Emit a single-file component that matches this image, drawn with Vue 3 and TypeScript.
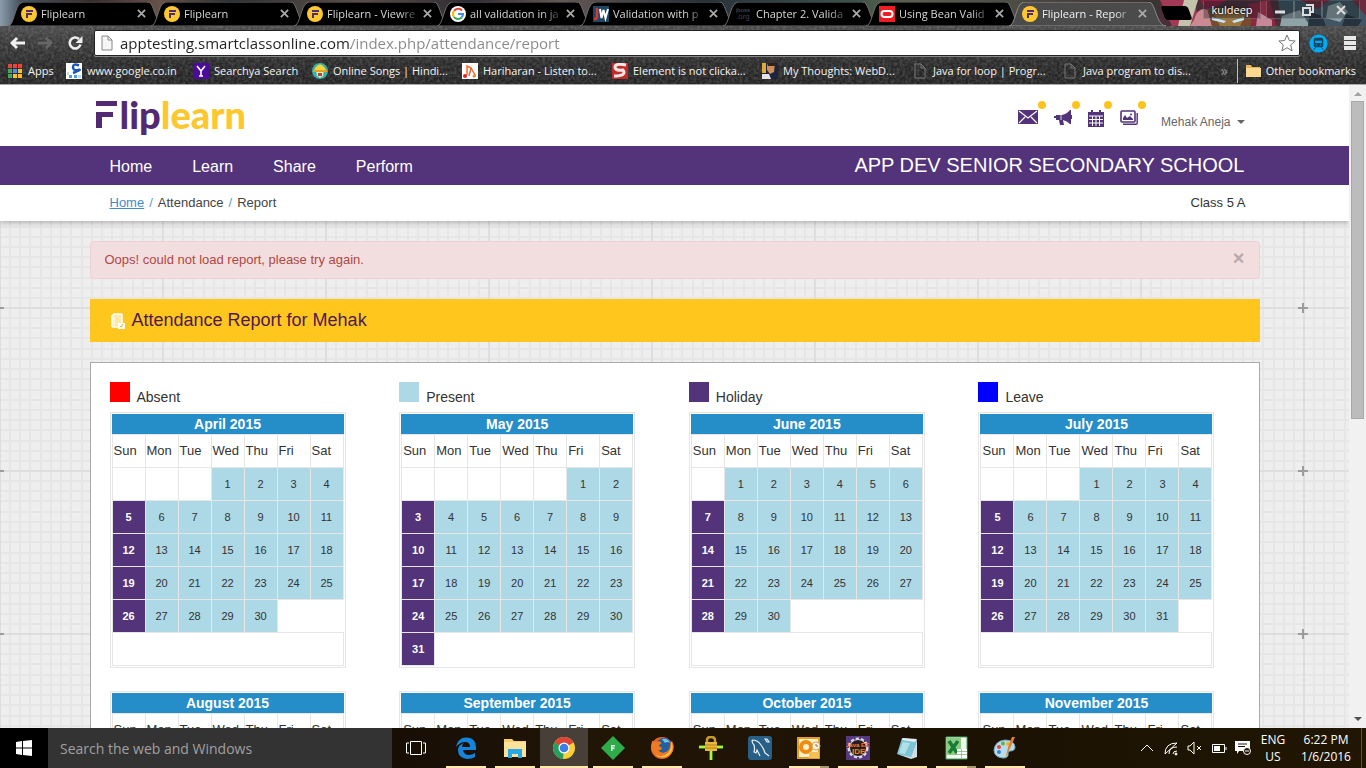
<script setup lang="ts">
import { ref } from 'vue'

interface Tab { title: string; icon: string; active?: boolean }
interface Bookmark { title: string; icon: string }
interface TaskApp { name: string; icon: string; state: string }
interface Month { name: string; offset: number; days: number }

const tabs: Tab[] = [
  { title: 'Fliplearn', icon: 'flip' },
  { title: 'Fliplearn', icon: 'flip' },
  { title: 'Fliplearn - Viewre', icon: 'flip' },
  { title: 'all validation in ja', icon: 'google' },
  { title: 'Validation with p', icon: 'jw' },
  { title: 'Chapter 2. Valida', icon: 'jboss' },
  { title: 'Using Bean Valid', icon: 'oracle' },
  { title: 'Fliplearn - Repor', icon: 'flip', active: true }
]

const bookmarks: Bookmark[] = [
  { title: 'Apps', icon: 'apps' },
  { title: 'www.google.co.in', icon: 's' },
  { title: 'Searchya Search', icon: 'y' },
  { title: 'Online Songs | Hindi...', icon: 'songs' },
  { title: 'Hariharan - Listen to...', icon: 'music' },
  { title: 'Element is not clicka...', icon: 'stack' },
  { title: 'My Thoughts: WebD...', icon: 'thoughts' },
  { title: 'Java for loop | Progr...', icon: 'page' },
  { title: 'Java program to dis...', icon: 'page' }
]

const apps: TaskApp[] = [
  { name: 'Edge', icon: 'edge', state: 'open' },
  { name: 'File Explorer', icon: 'explorer', state: 'open' },
  { name: 'Chrome', icon: 'chrome', state: 'current' },
  { name: 'Feeder', icon: 'diamond', state: 'open' },
  { name: 'Firefox', icon: 'firefox', state: 'open' },
  { name: 'Tunnel', icon: 'lock', state: '' },
  { name: 'MySQL Workbench', icon: 'mysql', state: '' },
  { name: 'Outlook', icon: 'outlook', state: 'open many' },
  { name: 'Java EE IDE', icon: 'eclipse', state: 'open' },
  { name: 'Notepad', icon: 'notepad', state: 'open' },
  { name: 'Excel', icon: 'excel', state: 'open many' },
  { name: 'Paint', icon: 'paint', state: 'open' }
]

const legend = [
  { label: 'Absent', kind: 'absent' },
  { label: 'Present', kind: 'present' },
  { label: 'Holiday', kind: 'holiday' },
  { label: 'Leave', kind: 'leave' }
]

const weekdays = ['Sun', 'Mon', 'Tue', 'Wed', 'Thu', 'Fri', 'Sat']

const months: Month[] = [
  { name: 'April 2015', offset: 3, days: 30 },
  { name: 'May 2015', offset: 5, days: 31 },
  { name: 'June 2015', offset: 1, days: 30 },
  { name: 'July 2015', offset: 3, days: 31 },
  { name: 'August 2015', offset: 6, days: 31 },
  { name: 'September 2015', offset: 2, days: 30 },
  { name: 'October 2015', offset: 4, days: 31 },
  { name: 'November 2015', offset: 0, days: 30 }
]

function weeksOf(m: Month): number[][] {
  const cells: number[] = Array(m.offset).fill(0)
  for (let d = 1; d <= m.days; d++) cells.push(d)
  const weeks: number[][] = []
  for (let i = 0; i < cells.length; i += 7) weeks.push(cells.slice(i, i + 7))
  return weeks
}

const gridSteps = [10, 20, 30, 41, 51, 61, 71, 82, 92, 102, 112, 122, 133, 143, 153]
const address = ref('apptesting.smartclassonline.com/index.php/attendance/report')
const query = ref('')
const alertOpen = ref(true)
</script>

<template>
  <div class="desktop">
    <header class="browser">
      <svg class="theme" viewBox="0 0 206 26" preserveAspectRatio="none" aria-hidden="true">
        <path fill="#4a2f38" d="M0 0h206v26H0z" />
        <path fill="#a33a55" d="M0 0h34l6 26H12z" />
        <path fill="#c4c3ac" d="M24 0h14l-8 26H18z" />
        <path fill="#8b2040" d="M40 0h26l-18 12z" />
        <path fill="#c98a94" d="M34 20q4-14 14-10l4 16H30z" />
        <path fill="#7a4a2c" d="M47 8h50l-6 18H52z" />
        <path fill="#a0773f" d="M54 14h32l-6 12H60z" />
        <path fill="#bfe8ff" d="M52 17l14 4-2 2-12-3zM84 17l-12 4 2 2 10-3z" />
        <path fill="#8c2741" d="M88 4l22-4 6 26H92z" />
        <path fill="#c48898" d="M98 12l14 8v6H96z" />
        <path fill="#405665" d="M118 0h88v26h-84z" />
        <path fill="#8ea3a8" d="M122 16l18-6 10 16h-30zM168 6l12-4 8 10-8 10-14-4z" />
        <path fill="#6d2c3d" d="M140 0h30l-12 9zM192 0h14v16z" />
        <path fill="#26323d" d="M150 12l12 4 4 10h-18zM186 14l16 6-4 6h-16z" />
      </svg>
      <div class="tabstrip">
        <div v-for="(t, i) in tabs" :key="i" class="tab" :class="{ active: t.active }">
          <svg class="tab-shape" viewBox="0 0 158 25" preserveAspectRatio="none" aria-hidden="true">
            <path d="M0 25C6 25 7 3 13 1Q14 0 16 0H139Q142 0 143 2C147 8 149 25 157 25Z" />
          </svg>
          <svg class="fav" viewBox="0 0 16 16" aria-hidden="true">
            <template v-if="t.icon === 'flip'">
              <circle cx="8" cy="8" r="8" fill="#fdc82f" />
              <path d="M5 4h7v2H5zM5 7h6v2H7v3H5z" fill="#4f2d6e" />
            </template>
            <template v-else-if="t.icon === 'google'">
              <circle cx="8" cy="8" r="8" fill="#fff" />
              <path d="M12 4.5A5 5 0 0 0 4 5" fill="none" stroke="#ea4335" stroke-width="2" />
              <path d="M4 5a5 5 0 0 0 0 6" fill="none" stroke="#fbbc05" stroke-width="2" />
              <path d="M4 11a5 5 0 0 0 7.500 .500" fill="none" stroke="#34a853" stroke-width="2" />
              <path d="M8 8h5a5 5 0 0 1-1.500 3.600" fill="none" stroke="#4285f4" stroke-width="2" />
            </template>
            <template v-else-if="t.icon === 'jw'">
              <path fill="#1b4a66" d="M0 0h16v16H0z" />
              <path d="M4 2v9q0 2-3 2" stroke="#d33" stroke-width="2.500" fill="none" />
              <path d="M7 3l1.500 9 2-8 2 8L15 3" stroke="#fff" stroke-width="2" fill="none" />
            </template>
            <template v-else-if="t.icon === 'jboss'">
              <text x="0" y="6" class="tiny">jboss</text>
              <text x="0" y="13" class="tiny org">.org</text>
            </template>
            <template v-else>
              <path fill="#ee1c25" d="M0 0h16v16H0z" />
              <rect x="2.500" y="5" width="11" height="6" rx="3" fill="none" stroke="#fff" stroke-width="2" />
            </template>
          </svg>
          <span class="tab-title">{{ t.title }}</span>
          <button class="tab-close" type="button" aria-label="Close tab">
            <svg viewBox="0 0 10 10"><path d="M1 1l8 8M9 1l-8 8" /></svg>
          </button>
        </div>
        <button class="newtab" type="button" aria-label="New tab"></button>
        <div class="window-controls">
          <button class="profile" type="button">kuldeep</button>
          <button type="button" aria-label="Minimize"><svg viewBox="0 0 14 14"><path d="M2 9h10" stroke-width="3" /></svg></button>
          <button type="button" aria-label="Restore"><svg viewBox="0 0 14 14"><path d="M5 2h7v7H9M2 5h7v7H2z" stroke-width="2" /></svg></button>
          <button type="button" class="wide" aria-label="Close window"><svg viewBox="0 0 14 14"><path d="M3 3l8 8M11 3l-8 8" stroke-width="2" /></svg></button>
        </div>
      </div>

      <div class="chrome">
        <svg class="grain" aria-hidden="true">
          <filter id="grain"><feTurbulence type="fractalNoise" baseFrequency="0.35" numOctaves="2" seed="4" /><feColorMatrix values="0 0 0 0 1  0 0 0 0 1  0 0 0 0 1  0.9 0 0 0 -0.3" /></filter>
          <rect width="100%" height="100%" filter="url(#grain)" />
        </svg>
        <div class="toolbar">
          <button type="button" aria-label="Back"><svg viewBox="0 0 16 16"><path d="M1 8l6-6 2 2-2.500 2.500H16v3H6.500L9 12l-2 2z" fill="#f1f1f1" /></svg></button>
          <button type="button" aria-label="Forward"><svg viewBox="0 0 16 16"><path d="M15 8L9 2 7 4l2.500 2.500H0v3h9.500L7 12l2 2z" fill="#666" /></svg></button>
          <button type="button" aria-label="Reload"><svg viewBox="0 0 16 16"><path d="M12 4A5.500 5.500 0 1 0 13.500 9.500" fill="none" stroke="#eee" stroke-width="2.600" /><path d="M15.500 1v7h-7z" fill="#eee" /></svg></button>
          <div class="omnibox">
            <svg class="doc" viewBox="0 0 12 16" aria-hidden="true"><path d="M1 1h6l4 4v10H1zM7 1v4h4" fill="#f6f6f6" stroke="#888" /></svg>
            <input v-model="address" type="text" aria-label="Address" spellcheck="false" />
            <button type="button" aria-label="Bookmark this page"><svg viewBox="0 0 18 18"><path d="M9 1l2.300 5.500 5.900.5-4.500 3.900 1.400 5.900L9 13.700l-5.100 3.100 1.400-5.900L.800 7l5.900-.5z" fill="#fff" stroke="#777" /></svg></button>
          </div>
          <button type="button" class="ext" aria-label="Trains">
            <svg viewBox="0 0 20 20"><circle cx="10" cy="10" r="9.500" fill="#03a9f4" /><path d="M7 4h6q2 0 2 2v6q0 2-2 2H7q-2 0-2-2V6q0-2 2-2z" fill="#14445c" /><path d="M6.500 7h7v2.500h-7z" fill="#03a9f4" /><path d="M7 14l-2 2.500M13 14l2 2.500" stroke="#14445c" /><path d="M7 11.500h1.500M11.500 11.500H13" stroke="#03a9f4" /></svg>
          </button>
          <button type="button" class="menu" aria-label="Menu"><svg viewBox="0 0 14 14"><path d="M1 0h12v4H1zM1 5h12v4H1zM1 10h12v4H1z" fill="#e8e8e8" /></svg></button>
        </div>

        <nav class="bookmarks" aria-label="Bookmarks">
          <a v-for="b in bookmarks" :key="b.title" href="#" :class="{ launcher: b.icon === 'apps' }">
            <svg viewBox="0 0 16 16" aria-hidden="true">
              <template v-if="b.icon === 'apps'">
                <path fill="#e8453c" d="M1 1h4v4H1zM6 1h4v4H6zM11 1h4v4h-4z" />
                <path fill="#3fa85b" d="M1 6h4v4H1z" /><path fill="#4a8af4" d="M6 6h4v4H6z" /><path fill="#fbbc2f" d="M11 6h4v4h-4zM6 11h4v4H6z" />
                <path fill="#3fa85b" d="M1 11h4v4H1z" /><path fill="#fbbc2f" d="M11 11h4v4h-4z" />
                <path d="M5.500 0v16M10.500 0v16M0 5.500h16M0 10.500h16" stroke="#333" />
              </template>
              <template v-else-if="b.icon === 's'">
                <path fill="#fff" d="M0 0h16v16H0z" />
                <path d="M13 2.500Q7 0 7 4t5 3-5 3" fill="none" stroke="#1d57b4" stroke-width="2.500" />
                <path fill="#4b9be6" d="M3 12h3v3H3zM8 12h3v3H8z" /><path fill="#bcdcf6" d="M12 12h3v3h-3zM1 9h2v3H1z" />
              </template>
              <template v-else-if="b.icon === 'y'">
                <path fill="#4b0c9c" d="M0 0h16v16H0z" /><path d="M4 3l4 5 4-5M8 8v5M6 13h4" stroke="#fff" stroke-width="1.600" fill="none" />
              </template>
              <template v-else-if="b.icon === 'songs'">
                <circle cx="8" cy="8" r="8" fill="#38b1a9" /><path d="M2 7q6-11 12 0z" fill="#f4d43a" /><path d="M4 7h8l-1 6-3 2-3-2z" fill="#e8e2cf" /><path d="M1 7h14v2H1z" fill="#e5a21f" /><path d="M6 10h4v3H6z" fill="#a04f2f" />
              </template>
              <template v-else-if="b.icon === 'music'">
                <path fill="#fff" d="M0 0h16v16H0z" /><path d="M5 12V3l4 2-2 8M9 5l4 7v2" stroke="#ef6b2e" stroke-width="1.500" fill="none" /><circle cx="3" cy="13" r="2" fill="#e2231a" /><circle cx="12" cy="13" r="1.500" fill="#ef8b2e" />
              </template>
              <template v-else-if="b.icon === 'stack'">
                <path fill="#c22b2b" d="M0 0h16v16H0z" /><path d="M14 2Q3 0 3 4t8 3q4 6-9 6" fill="none" stroke="#f3e5e2" stroke-width="3" />
              </template>
              <template v-else-if="b.icon === 'thoughts'">
                <path fill="#1c2440" d="M0 0h16v16H0z" /><path d="M5 0h8l-1 9-4 2-3-4z" fill="#d18f55" /><path d="M0 11l7 0 2 5H0z" fill="#e6e3e8" /><path d="M5 0h9v3H6z" fill="#33211c" /><path d="M0 0h4v10H0z" fill="#e3a83c" />
              </template>
              <template v-else>
                <path d="M3 1h6l4 4v10H3zM9 1v4h4" fill="none" stroke="#777" />
              </template>
            </svg>
            <span>{{ b.title }}</span>
          </a>
          <button class="more" type="button" aria-label="More bookmarks">»</button>
          <a class="other" href="#">
            <svg viewBox="0 0 16 16" aria-hidden="true"><path d="M1 2h5l1 2h8v10H1z" fill="#e9b55c" /><path d="M1 5h15v9H1z" fill="#fcd98f" /></svg>
            <span>Other bookmarks</span>
          </a>
        </nav>
      </div>
    </header>

    <div class="viewport">
      <div class="scroller">
        <div class="page">
          <svg class="backdrop" aria-hidden="true">
            <defs>
              <pattern id="cells" x="-1" y="59" width="163" height="163" patternUnits="userSpaceOnUse">
                <path v-for="s in gridSteps" :key="s" :d="`M${s} 0h2v163h-2zM0 ${s}h163v2H0z`" fill="#e6e6e6" />
                <path d="M0 0h2v163H0zM0 0h163v2H0z" fill="#dedede" />
              </pattern>
              <pattern id="crosses" x="-2" y="59" width="1304" height="163" patternUnits="userSpaceOnUse">
                <path d="M0 0h6v2H0zM1300 0h4v2h-4zM0 0h2v6H0zM0 159h2v4H0z" fill="#9c9c9c" />
              </pattern>
            </defs>
            <rect width="100%" height="100%" fill="url(#cells)" />
            <rect width="100%" height="100%" fill="url(#crosses)" />
          </svg>

          <div class="masthead">
            <div class="container brandbar">
              <a class="logo" href="#" aria-label="Fliplearn">
                <svg viewBox="0 0 22 28" aria-hidden="true"><path d="M0 1h21v5H0zM0 12h17v5H6v11H0z" fill="#532a72" /></svg>
                <span class="lip">lip</span><span class="learn">learn</span>
              </a>
              <div class="tools">
                <button type="button" aria-label="Messages"><svg class="i-mail" viewBox="0 0 20 14"><path d="M0 0h20v14H0z" fill="#53337a" /><path d="M1 1l9 7 9-7M1 13l6-6M19 13l-6-6" fill="none" stroke="#fff" stroke-width="1.200" /></svg></button>
                <button type="button" aria-label="Announcements"><svg class="i-horn" viewBox="0 0 18 16"><path d="M0 6h2V5h6q5-1 8-5h1v5h1v4h-1v5h-1q-3-3-7-4l1 5H6L5 10H2V8H0z" fill="#53337a" /><path d="M7 5v5" stroke="#fff" stroke-width=".8" /></svg></button>
                <button type="button" aria-label="Calendar"><svg class="i-cal" viewBox="0 0 16 17"><path d="M0 2h16v15H0zM3 0h2v4H3zM11 0h2v4h-2z" fill="#53337a" /><path d="M1 6h14M1 9.500h14M1 13h14M4.500 6v10M8 6v10M11.500 6v10" stroke="#fff" /></svg></button>
                <button type="button" aria-label="Gallery"><svg class="i-pic" viewBox="0 0 18 15"><rect x="1" y="1" width="14" height="11" rx="1" fill="none" stroke="#53337a" stroke-width="1.600" /><path d="M3 14.200h13q1.200 0 1.200-1.200V3" fill="none" stroke="#53337a" stroke-width="1.400" /><path d="M3 10V8l2-3 2 3 3-2 3 3v1z" fill="#53337a" /><circle cx="11" cy="4.500" r="1" fill="#53337a" /></svg></button>
                <button type="button" class="user">Mehak Aneja</button>
              </div>
            </div>
            <nav class="mainnav">
              <div class="container navrow">
                <a href="#">Home</a><a href="#">Learn</a><a href="#">Share</a><a href="#">Perform</a>
                <h1>APP DEV SENIOR SECONDARY SCHOOL</h1>
              </div>
            </nav>
            <div class="container crumbs">
              <a href="#">Home</a><i>/</i><span>Attendance</span><i>/</i><span>Report</span>
              <strong>Class 5 A</strong>
            </div>
          </div>

          <main class="container content">
            <div v-if="alertOpen" class="alert" role="alert">
              <span>Oops! could not load report, please try again.</span>
              <button type="button" aria-label="Dismiss" @click="alertOpen = false">×</button>
            </div>
            <h2>
              <svg viewBox="0 0 14 16" aria-hidden="true"><path d="M3 1h7q1 0 1 1v12H2q-1 0-1-1V3z" fill="#ffe9a8" stroke="#fff" stroke-width="1.500" /><path d="M3 4v8" stroke="#fff" /><path d="M7 10h7v6H7z" fill="#fff" /><path d="M9 13l1 1 2-3" fill="none" stroke="#f2b400" /></svg>
              Attendance Report for Mehak
            </h2>
            <section class="panel">
              <div class="columns legend">
                <div v-for="l in legend" :key="l.kind" class="key"><b :class="l.kind"></b><span>{{ l.label }}</span></div>
              </div>
              <div class="columns">
                <div v-for="m in months" :key="m.name" class="month">
                  <table>
                    <caption>{{ m.name }}</caption>
                    <thead><tr><th v-for="w in weekdays" :key="w" scope="col">{{ w }}</th></tr></thead>
                    <tbody>
                      <tr v-for="(week, wi) in weeksOf(m)" :key="wi">
                        <td v-for="(d, di) in week" :key="di" :class="d ? (di === 0 ? 'holiday' : 'present') : ''">{{ d || '' }}</td>
                      </tr>
                      <tr v-if="weeksOf(m).length < 6"><td colspan="7"></td></tr>
                    </tbody>
                  </table>
                </div>
              </div>
            </section>
          </main>
        </div>
      </div>
      <div class="scrollbar" aria-hidden="true"><i class="up"></i><b></b><i class="down"></i></div>
    </div>

    <footer class="taskbar">
      <button class="start" type="button" aria-label="Start"><svg viewBox="0 0 16 16"><path d="M0 2l6-1v6.500H0zM7 1l9-1v7.500H7zM0 8.500h6V15l-6-1zM7 8.500h9V16l-9-1z" fill="#fff" /></svg></button>
      <input v-model="query" class="search" type="search" placeholder="Search the web and Windows" aria-label="Search the web and Windows" />
      <button class="taskview" type="button" aria-label="Task View"><svg viewBox="0 0 20 16"><path d="M4.500 1.500h11v13h-11zM3 3H.500v10H3M17 3h2.500v10H17" fill="none" stroke="#fff" /></svg></button>
      <div class="apps">
        <button v-for="a in apps" :key="a.name" type="button" :class="a.state" :aria-label="a.name">
          <svg viewBox="0 0 24 24">
            <template v-if="a.icon === 'edge'"><path d="M2 11Q4 1 13 1.500q9 .5 9 10V14H9q1 5 6 5 3 0 6-2v4q-3 2-8 2-9-1-9-9 0-5 6-7-2 1-2 4h8q0-5-5-5-5 0-9 5z" fill="#1684dc" /></template>
            <template v-else-if="a.icon === 'explorer'"><path d="M1 3h8l2 2h12v16H1z" fill="#f4cf6a" /><path d="M1 6h22v15H1z" fill="#fbe39a" /><path d="M5 22v-9h14v9h-4v-4H9v4z" fill="#28a8e8" /></template>
            <template v-else-if="a.icon === 'chrome'"><circle cx="12" cy="12" r="11" fill="#f9cf35" /><path d="M12 12L2.500 6.500A11 11 0 0 1 21.500 6.500z" fill="#dc4437" /><path d="M12 12L2.500 6.500A11 11 0 0 0 11 23z" fill="#24a05a" /><path d="M12 12L3 6.500l8-2 11 2.500H12z" fill="#dc4437" /><circle cx="12" cy="12" r="5.500" fill="#fff" /><circle cx="12" cy="12" r="4.300" fill="#3d7de8" /></template>
            <template v-else-if="a.icon === 'diamond'"><path d="M12 0l12 12-12 12L0 12z" fill="#2eac4a" /><path d="M10 9h4v1.500h-2.500v1h2V13h-2v2H10z" fill="#e8f8e8" /></template>
            <template v-else-if="a.icon === 'firefox'"><circle cx="12" cy="12" r="11" fill="#e8641f" /><circle cx="14" cy="10" r="8" fill="#245f9f" /><path d="M12 3q6-1 8 4-3-2-5 0z" fill="#6fc6ea" /><path d="M2 5l4 1q3-2 6 1-3 1-3 3l3 2q-1 3-4 2 3 4 8 2 5-3 4-9l2-2q4 7-1 13-5 5-12 3Q1 18 1 11z" fill="#ee7a23" /><path d="M21 5q4 8-2 14-7 5-14 0 8 3 13-2 4-5 3-12z" fill="#ffc043" /></template>
            <template v-else-if="a.icon === 'lock'"><path d="M0 11h24M12 14v10" stroke="#3c7d1c" stroke-width="4" /><path d="M0 11h24M12 14v10" stroke="#b8ef3d" stroke-width="2" /><path d="M8 7V4q0-3 4-3t4 3v3" stroke="#c89a28" stroke-width="2.500" fill="none" /><path d="M6 6h12v9H6z" fill="#e8b83c" /><path d="M6 9h12M6 12h12" stroke="#b78018" /></template>
            <template v-else-if="a.icon === 'mysql'"><rect width="24" height="24" rx="3" fill="#285f86" /><path d="M4 4q6 0 9 5 3 4 4 8l4 3M4 4q0 3 2 5 1 4 0 7l2 1 1-3 3 6M17 3l2 3h2l-2-3z" fill="none" stroke="#e7f1f7" stroke-width="1.200" /></template>
            <template v-else-if="a.icon === 'outlook'"><path d="M1 2h21v20H1z" fill="#fff0c8" stroke="#e79b20" stroke-width="2" /><circle cx="9" cy="11" r="5" fill="none" stroke="#ed8b16" stroke-width="4" /><path d="M12 16h10v6H12z" fill="#f4c058" /><circle cx="19" cy="10" r="4" fill="#fff4da" stroke="#d9a550" /><path d="M19 8v2h2" stroke="#966" fill="none" /></template>
            <template v-else-if="a.icon === 'eclipse'"><path d="M0 0h24v24H0z" fill="#563980" /><circle cx="12" cy="12" r="9" fill="#291a24" stroke="#ddd" stroke-width="3" stroke-dasharray="3 2" /><circle cx="12" cy="12" r="8.500" fill="#291a24" stroke="#ddd" /><text x="0" y="11" class="badge">Java EE</text><text x="6" y="18" class="badge ide">IDE</text></template>
            <template v-else-if="a.icon === 'notepad'"><path d="M7 2l15 2-6 18-14-4z" fill="#7cc5d8" /><path d="M8 2l14 1-2 3L7 4z" fill="#e4eef2" /><path d="M2 18l14 3 6-17v17l-6 2z" fill="#d0dde2" /><path d="M8 6l-4 11 6 1 5-11z" fill="#b1e0e7" /></template>
            <template v-else-if="a.icon === 'excel'"><path d="M2 1h21v22H2z" fill="#f0f8ee" stroke="#46a35a" /><path d="M2 2h15v17H2z" fill="#8dcb83" /><path d="M5 5l8 12M14 5L5 17" stroke="#187c36" stroke-width="3.500" /><path d="M13 13h10v9H13z" fill="#fff" /><path d="M13 15.500h10M13 18.500h10M17.500 13v9" stroke="#79bb83" stroke-width=".8" /></template>
            <template v-else><path d="M12 4q9 0 10 7 0 4-5 4-2 0-2 2 1 5-5 5-9-1-9-8Q2 5 12 4z" fill="#b9dced" stroke="#78a9c2" /><circle cx="6" cy="11" r="2" fill="#e6452f" /><circle cx="10" cy="7.500" r="2" fill="#5ab44b" /><circle cx="6" cy="16" r="2" fill="#3b80d0" /><circle cx="15" cy="8" r="2" fill="#f2b12d" /><path d="M22 1l-3 7-7 15 4-15 3-7z" fill="#dd8234" /></template>
          </svg>
        </button>
      </div>
      <div class="tray">
        <button type="button" aria-label="Show hidden icons"><svg viewBox="0 0 16 16"><path d="M2 11l6-6 6 6" /></svg></button>
        <button type="button" aria-label="Network"><svg viewBox="0 0 16 16"><path d="M2 14Q2 3 14 3M6 14q0-7 8-7M10 14q0-3 4-3M2 14L14 3" /><circle cx="13" cy="14" r="1" fill="#fff" /></svg></button>
        <button type="button" aria-label="Volume"><svg viewBox="0 0 16 16"><path d="M1 6h2l4-4v12l-4-4H1zM10 6l4 4M14 6l-4 4" /></svg></button>
        <button type="button" aria-label="Battery"><svg viewBox="0 0 16 16"><path d="M1.500 4.500h12v8h-12zM15 7v3" /><path d="M3 6h6v5H3z" fill="#fff" stroke="none" /></svg></button>
        <button type="button" aria-label="Notifications"><svg viewBox="0 0 16 16"><path d="M0 1h15v10H4l-2 3v-3H0z" fill="#fff" stroke="none" /><path d="M3 4h9M3 6.500h7" stroke="#1d1306" /><circle cx="12" cy="11" r="3.500" fill="#1d1306" /><path d="M10 11h4" /></svg></button>
        <button type="button" class="lang">ENG<br />US</button>
        <button type="button" class="clock">6:22 PM<br />1/6/2016</button>
      </div>
    </footer>
  </div>
</template>

<style>
html, body { margin: 0; overflow: hidden; }
</style>

<style scoped>
* { box-sizing: border-box; }
.desktop { height: 100vh; display: flex; flex-direction: column; font-family: "Liberation Sans", Arial, sans-serif; color: #333; overflow: hidden; }
button { border: 0; padding: 0; margin: 0; background: none; font: inherit; color: inherit; display: flex; align-items: center; justify-content: center; }
a { color: inherit; text-decoration: none; }
svg { display: block; flex: none; }

.browser { position: relative; flex: none; font-family: "Open Sans", "Noto Sans", sans-serif; font-size: 11px; background: linear-gradient(90deg, #8c9cac 0, #46535f 20px, #392d2c 90px, #675247 160px, #2e3234 230px, #5c4d46 360px, #2f2b34 470px, #655754 560px, #27313a 700px, #3b514b 850px, #5b604e 900px, #3c3333 1150px, #443); }
.theme { position: absolute; top: 0; right: 0; width: 206px; height: 26px; }
.tabstrip { position: relative; display: flex; height: 26px; padding: 1px 0 0 8px; }
.tab { position: relative; width: 143px; flex: none; display: flex; align-items: center; padding-left: 13px; color: #d6d6d6; }
.tab-shape { position: absolute; left: 0; top: 1px; width: 158px; height: 24px; fill: #000; stroke: #707070; }
.tab.active { color: #f0f0f0; z-index: 1; }
.tab.active .tab-shape { fill: #4b4b4b; stroke: #8d8d8d; }
.fav { position: relative; width: 16px; height: 16px; margin-right: 4px; }
.tiny { font: 6px "Liberation Sans", sans-serif; fill: #4b5b74; }
.org { font-size: 8px; fill: #34465f; }
.tab-title { position: relative; width: 94px; white-space: nowrap; line-height: 18px; mask-image: linear-gradient(90deg, #000 72px, transparent 94px); }
.tab-close { position: relative; width: 12px; height: 12px; }
.tab-close svg { width: 9px; height: 9px; stroke: #aaa; stroke-width: 2; }
.newtab { margin: 5px 0 0 11px; width: 27px; height: 14px; background: #000; border-radius: 3px; transform: skewX(20deg); }
.window-controls { margin-left: auto; display: flex; height: 18px; color: #fff; }
.window-controls button { width: 28px; border: 1px solid rgb(255 255 255 / 20%); border-top: 0; background: rgb(20 25 30 / 35%); }
.window-controls .profile { width: 58px; margin-right: 5px; text-shadow: 0 0 3px #000; }
.window-controls .wide { width: 38px; margin-right: 6px; }
.window-controls svg { width: 14px; height: 14px; stroke: #ddd; fill: none; }

.chrome { position: relative; background: linear-gradient(#4c4c4c, #3c3c3c 14px, #292929 40px, #242424); border-bottom: 1px solid #aaa; }
.grain { position: absolute; left: 0; top: 0; width: 100%; height: 100%; opacity: .35; }
.toolbar { position: relative; height: 31px; display: flex; align-items: center; padding: 3px 9px 0; gap: 13px; }
.toolbar > button svg { width: 16px; height: 16px; }
.omnibox { flex: 1; margin-left: -2px; height: 26px; background: #fff; border: 1px solid #222; border-radius: 2px; box-shadow: 0 1px 0 #888; display: flex; align-items: center; padding: 0 3px 0 6px; }
.omnibox input { flex: 1; min-width: 0; height: 22px; border: 0; outline: 0; padding: 0; margin: 0 7px; font: 15px "Open Sans", "Noto Sans", sans-serif; color: transparent; background: linear-gradient(90deg, #222 231px, #888 231px); background-clip: text; }
.omnibox svg { width: 18px; height: 18px; }
.omnibox .doc { width: 12px; height: 16px; }
.toolbar .ext { margin-left: -4px; }
.toolbar .ext svg { width: 19px; height: 19px; }
.toolbar .menu { margin-left: 2px; }
.toolbar .menu svg { width: 14px; height: 14px; }
.bookmarks { position: relative; height: 27px; display: grid; grid-template-columns: 59px 127px 119px repeat(6, 150px) 1fr auto; align-items: center; padding: 0 10px 0 7px; color: #f3f3f3; }
.bookmarks a { display: flex; align-items: center; gap: 5px; white-space: nowrap; line-height: 20px; }
.bookmarks svg { width: 16px; height: 16px; }
.more { color: #999; font-size: 14px; }
.bookmarks .other { border-left: 1px solid #b8c0c8; padding-left: 7px; height: 24px; }

.viewport { flex: 1; min-height: 0; display: flex; }
.scroller { flex: 1; min-width: 0; overflow: auto; scrollbar-width: none; }
.page { position: relative; min-height: 100%; padding-bottom: 20px; background: #eee; }
.backdrop { position: absolute; left: 0; top: 0; width: 100%; height: 100%; }
.container { max-width: 1170px; margin: 0 auto; }
.masthead { position: relative; background: #fff; box-shadow: 0 2px 5px rgb(0 0 0 / 25%); }
.brandbar { height: 61px; display: flex; justify-content: space-between; padding: 0 15px 0 6px; }
.logo { display: flex; align-items: flex-start; padding-top: 15px; font: 900 38px/28px Lato, sans-serif; }
.logo svg { width: 22px; height: 28px; margin-right: 2px; }
.lip { color: #532a72; }
.learn { color: #fdc82f; }
.tools { display: flex; align-items: flex-start; gap: 16px; padding-top: 25px; }
.tools button { position: relative; }
.tools button:not(.user)::after { content: ""; position: absolute; right: -8px; top: -9px; width: 8px; height: 8px; border-radius: 50%; background: #fdc41f; }
.i-mail { width: 20px; height: 14px; }
.i-horn { width: 18px; height: 16px; }
.i-cal { width: 16px; height: 17px; }
.i-pic { width: 18px; height: 15px; }
.user { margin-left: 7px; padding-top: 4px; font-size: 12px; line-height: 16px; color: #666; }
.tools .user::after { content: ""; margin-left: 6px; border: 4px solid transparent; border-top-color: #666; border-bottom: 0; }
.mainnav { background: #53337a; color: #fff; }
.navrow { height: 39px; display: flex; align-items: center; gap: 40px; padding: 2px 15px 0 20px; font-size: 16px; }
.navrow h1 { margin: 0 0 4px auto; font-size: 20px; font-weight: 400; line-height: 24px; white-space: nowrap; }
.crumbs { height: 36px; display: flex; align-items: center; padding: 0 14px 2px 20px; font-size: 13px; color: #444; }
.crumbs a { color: #428bca; text-decoration: underline; }
.crumbs i { font-style: normal; color: #5b9bd0; margin: 0 5px; }
.crumbs strong { margin-left: auto; font-weight: 400; color: #333; }
.content { position: relative; padding-top: 20px; }
.alert { height: 38px; display: flex; align-items: center; justify-content: space-between; padding: 0 14px 2px; border: 1px solid #ecd1d5; border-radius: 4px; background: #f2dede; color: #b04745; font-size: 13px; margin-bottom: 20px; }
.alert button { font-size: 20px; font-weight: 700; line-height: 20px; color: #b9abab; padding-bottom: 2px; }
.content h2 { margin: 0 0 20px; height: 43px; display: flex; align-items: center; gap: 7px; padding-left: 21px; background: #ffc61e; color: #4e1a55; font-size: 18px; font-weight: 400; }
.content h2 svg { width: 14px; height: 16px; }
.panel { background: #fff; border: 1px solid #aaa; padding: 19px 44px 20px 19px; }
.columns { display: grid; grid-template-columns: repeat(4, 236px); justify-content: space-between; row-gap: 23px; }
.legend { margin-bottom: 10px; }
.key { display: flex; gap: 7px; height: 20px; font-size: 14px; line-height: 30px; }
.key b { width: 20px; height: 20px; }
.absent { background: #f00; }
.present { background: #add8e6; }
.holiday { background: #53337a; }
.leave { background: #00f; }
.month { border: 1px solid #e6e6e6; padding: 1px; }
table { width: 232px; table-layout: fixed; border-collapse: collapse; }
caption { background: #258dc8; color: #fff; font-size: 14px; font-weight: 700; line-height: 20px; height: 20px; }
tr { height: 33px; }
th, td { border: 1px solid #e6e6e6; padding: 0; height: 33px; }
th { padding: 0 0 2px 1px; text-align: left; font-size: 13px; font-weight: 400; }
td { text-align: center; font-size: 11px; }
td.holiday { color: #fff; font-weight: 700; }

.scrollbar { flex: none; width: 17px; background: #f1f1f1; display: flex; flex-direction: column; align-items: center; padding: 7px 0; }
.scrollbar b { width: 13px; height: 318px; background: #bcbcbc; border: 1px solid #a8a8a8; margin-top: 5px; }
.up { border: 4px solid transparent; border-bottom-color: #a3a3a3; border-top: 0; }
.down { border: 4px solid transparent; border-top-color: #505050; border-bottom: 0; margin-top: auto; }

.taskbar { flex: none; height: 40px; display: flex; background: linear-gradient(90deg, #000 0 48px, #180e04 400px, #211506 600px, #1b1204 1000px, #201602); color: #fff; font-family: "Open Sans", "Noto Sans", sans-serif; }
.start { width: 48px; }
.start svg { width: 16px; height: 16px; }
.search { width: 344px; border: 0; border-radius: 0; background: #333; color: #eee; font: 14px "Open Sans", "Noto Sans", sans-serif; padding: 0 12px; outline: 0; }
.search::placeholder { color: #a0a0a0; }
.taskview { width: 50px; padding-right: 2px; }
.taskview svg { width: 20px; height: 16px; }
.apps { display: flex; gap: 1px; }
.apps button { position: relative; width: 48px; }
.apps button svg { width: 24px; height: 24px; }
.apps .current { background: #484038; }
.apps .open::after, .apps .current::after { content: ""; position: absolute; left: 4px; right: 4px; bottom: 0; height: 2px; background: #ffe8a8; }
.apps .current::after { left: 0; right: 0; }
.apps .many::after { background: linear-gradient(90deg, #ffe8a8 31px, #a89a70 31px); }
.badge { font: bold 6px "Liberation Sans", sans-serif; fill: #f48220; }
.ide { font-size: 8px; }
.tray { margin-left: auto; display: flex; margin-right: 4px; border-right: 1px solid #5b5138; padding-right: 11px; }
.tray button { width: 24px; }
.tray svg { width: 16px; height: 16px; fill: none; stroke: #fff; }
.tray button.lang { width: 36px; font-size: 12px; line-height: 17px; }
.tray button.clock { width: 48px; margin-left: 11px; font-size: 12px; line-height: 17px; white-space: nowrap; }
</style>
